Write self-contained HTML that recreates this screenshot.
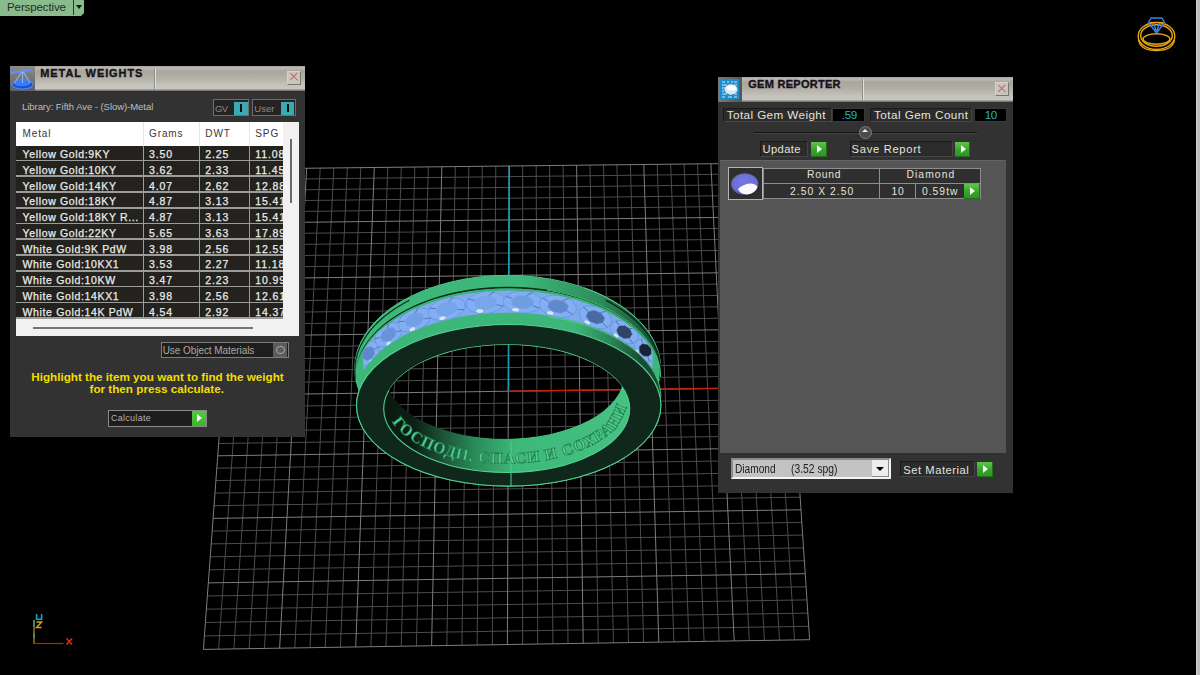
<!DOCTYPE html>
<html><head><meta charset="utf-8"><style>
*{margin:0;padding:0;box-sizing:border-box}
html,body{width:1200px;height:675px;overflow:hidden;background:#000;font-family:"Liberation Sans",sans-serif}
.a{position:absolute}
.t{position:absolute;white-space:pre;line-height:1}
</style></head><body>
<svg class="a" style="left:0;top:0" width="1200" height="675" viewBox="0 0 1200 675">
<path d="M252.5 168.8L218.6 649.2M238.2 179.7L778.7 173.6M266.1 168.7L233.9 648.9M237.4 190.5L779.4 184.3M279.6 168.5L249.1 648.7M236.6 201.3L780.1 195.1M293.2 168.4L264.4 648.4M235.8 212.2L780.8 205.9M320.2 168.1L294.8 647.9M234.2 234.1L782.3 227.7M333.8 167.9L310.0 647.7M233.4 245.2L783.0 238.7M347.3 167.8L325.2 647.5M232.5 256.3L783.7 249.7M360.8 167.6L340.4 647.2M231.7 267.5L784.5 260.8M387.8 167.3L370.9 646.7M230.0 290.1L786.0 283.3M401.3 167.2L386.0 646.5M229.2 301.5L786.7 294.6M414.8 167.0L401.2 646.2M228.3 313.0L787.5 305.9M428.3 166.9L416.4 646.0M227.5 324.5L788.2 317.4M455.3 166.6L446.8 645.5M225.8 347.7L789.8 340.4M468.8 166.4L461.9 645.3M224.9 359.5L790.5 352.1M482.3 166.3L477.1 645.0M224.0 371.3L791.3 363.8M495.8 166.1L492.3 644.8M223.1 383.1L792.1 375.6M522.7 165.8L522.6 644.3M221.4 407.1L793.7 399.3M536.2 165.7L537.7 644.1M220.5 419.1L794.5 411.3M549.6 165.5L552.9 643.8M219.6 431.3L795.3 423.4M563.1 165.4L568.0 643.6M218.7 443.5L796.1 435.5M590.0 165.1L598.3 643.1M216.8 468.2L797.7 459.9M603.5 164.9L613.4 642.8M215.9 480.6L798.5 472.3M616.9 164.8L628.5 642.6M215.0 493.1L799.3 484.7M630.4 164.6L643.6 642.4M214.0 505.7L800.2 497.2M657.2 164.3L673.9 641.9M212.2 531.1L801.8 522.4M670.7 164.2L689.0 641.6M211.2 543.9L802.7 535.1M684.1 164.0L704.1 641.4M210.3 556.8L803.5 547.9M697.5 163.9L719.1 641.1M209.3 569.8L804.4 560.8M724.4 163.6L749.3 640.7M207.4 596.0L806.1 586.8M737.8 163.4L764.4 640.4M206.4 609.2L807.0 599.9M751.2 163.3L779.5 640.2M205.4 622.5L807.8 613.1M764.6 163.1L794.5 639.9M204.4 635.9L808.7 626.3" stroke="#4c4c4c" stroke-width="1" fill="none"/>
<path d="M239.0 169.0L203.4 649.4M239.0 169.0L778.0 163.0M306.7 168.2L279.6 648.2M235.0 223.1L781.6 216.7M374.3 167.5L355.7 647.0M230.9 278.8L785.2 272.0M441.8 166.7L431.6 645.7M226.6 336.1L789.0 328.9M509.2 166.0L507.4 644.5M222.2 395.1L792.9 387.4M576.6 165.2L583.2 643.3M217.7 455.8L796.9 447.7M643.8 164.5L658.8 642.1M213.1 518.4L801.0 509.8M710.9 163.7L734.2 640.9M208.3 582.9L805.2 573.7M778.0 163.0L809.6 639.7M203.4 649.4L809.6 639.7" stroke="#7c7c7c" stroke-width="1" fill="none"/>
<path d="M508.4 391.2L509.2 166.0" stroke="#14a3b4" stroke-width="1.6"/>
<path d="M508.4 391.2L792.9 387.4" stroke="#c42010" stroke-width="1.6"/>
<defs>
<linearGradient id="gTop" gradientUnits="userSpaceOnUse" x1="520" y1="0" x2="660" y2="0">
<stop offset="0" stop-color="#3eb87a"/><stop offset="0.55" stop-color="#2f8e5c"/><stop offset="1" stop-color="#184a30"/></linearGradient>
<linearGradient id="gLow" gradientUnits="userSpaceOnUse" x1="575" y1="0" x2="640" y2="0">
<stop offset="0" stop-color="#3db679"/><stop offset="0.6" stop-color="#2a8052"/><stop offset="1" stop-color="#1a4c32"/></linearGradient>
<linearGradient id="gIn" gradientUnits="userSpaceOnUse" x1="390" y1="0" x2="630" y2="0">
<stop offset="0" stop-color="#0a1a10"/><stop offset="0.1" stop-color="#0d2015"/><stop offset="0.35" stop-color="#2a8a58"/><stop offset="0.52" stop-color="#3db878"/><stop offset="1" stop-color="#46c283"/></linearGradient>
<clipPath id="cGemBand"><path d="M652.3 350.7L650.1 347.2L647.6 343.7L644.9 340.3L641.9 337.0L638.7 333.7L635.2 330.5L631.5 327.4L627.6 324.4L623.5 321.5L619.2 318.7L614.7 316.0L609.9 313.4L605.0 311.0L600.0 308.6L594.7 306.4L589.3 304.3L583.8 302.4L578.1 300.6L572.3 298.9L566.4 297.4L560.4 296.1L554.3 294.8L548.1 293.8L541.8 292.8L535.5 292.1L529.1 291.5L522.7 291.0L516.3 290.8L509.8 290.6L503.4 290.7L496.9 290.9L490.5 291.2L484.1 291.7L477.7 292.4L471.4 293.2L465.2 294.2L459.0 295.3L453.0 296.6L447.0 298.0L441.1 299.6L435.4 301.3L429.8 303.2L424.3 305.2L419.0 307.3L413.8 309.6L408.8 312.0L404.0 314.5L399.3 317.1L394.9 319.8L390.7 322.7L386.6 325.6L382.8 328.7L379.2 331.8L375.9 335.0L372.8 338.3L369.9 341.7L367.2 345.2L364.9 348.7L362.7 352.2L363.5 370.6L365.6 367.2L368.0 363.9L370.7 360.7L373.5 357.5L376.6 354.4L380.0 351.4L383.6 348.4L387.4 345.6L391.4 342.8L395.6 340.2L400.1 337.6L404.7 335.1L409.5 332.8L414.5 330.5L419.6 328.4L425.0 326.4L430.4 324.5L436.0 322.8L441.8 321.2L447.6 319.7L453.6 318.3L459.6 317.1L465.8 316.1L472.0 315.1L478.3 314.4L484.6 313.7L491.0 313.3L497.4 312.9L503.9 312.8L510.3 312.7L516.8 312.8L523.2 313.1L529.6 313.5L536.0 314.1L542.3 314.8L548.5 315.7L554.7 316.7L560.8 317.8L566.8 319.1L572.7 320.5L578.5 322.1L584.2 323.8L589.7 325.6L595.1 327.6L600.3 329.6L605.3 331.8L610.2 334.1L614.9 336.6L619.4 339.1L623.8 341.7L627.9 344.4L631.8 347.3L635.4 350.2L638.9 353.2L642.1 356.2L645.1 359.4L647.8 362.6L650.3 365.8L652.5 369.2Z"/></clipPath>
<clipPath id="cBin"><ellipse cx="504.8" cy="375.8" rx="118.9" ry="62.9" /></clipPath>
<mask id="mHole" maskUnits="userSpaceOnUse" x="0" y="0" width="1200" height="675">
<rect x="0" y="0" width="1200" height="675" fill="#fff"/>
<ellipse cx="506.7" cy="408.7" rx="123.0" ry="63.8" fill="#000" clip-path="url(#cBin)"/>
</mask>
<mask id="mText" maskUnits="userSpaceOnUse" x="0" y="0" width="1200" height="675">
<rect x="0" y="0" width="1200" height="675" fill="#fff"/><ellipse cx="504.8" cy="375.8" rx="118.9" ry="62.9" fill="#000"/></mask>
<path id="tp" d="M390.0 419.3L396.2 427.5L402.3 433.4L408.5 438.1L414.6 442.1L420.8 445.5L426.9 448.4L433.1 451.0L439.2 453.3L445.4 455.2L451.5 457.0L457.7 458.5L463.8 459.8L470.0 460.8L476.2 461.8L482.3 462.5L488.5 463.0L494.6 463.4L500.8 463.6L506.9 463.7L513.1 463.6L519.2 463.3L525.4 462.9L531.5 462.3L537.7 461.6L543.8 460.6L550.0 459.5L556.2 458.1L562.3 456.6L568.5 454.8L574.6 452.7L580.8 450.4L586.9 447.8L593.1 444.7L599.2 441.2L605.4 437.0L611.5 432.0L617.7 425.6L623.8 414.5L630.0 400.1"/>
</defs>
<g mask="url(#mHole)">
<ellipse cx="507.6" cy="368.3" rx="152.9" ry="92.9" fill="#3db679" stroke="#52d091" stroke-width="1"/>
<ellipse cx="508.7" cy="405.3" rx="152.2" ry="80.8" fill="#3db679" stroke="#52d091" stroke-width="1"/>
<path d="M660.5 368.3L660.3 363.4L659.6 358.4L658.6 353.5L657.0 348.7L655.1 343.9L652.8 339.1L650.0 334.5L646.8 329.9L643.3 325.5L639.3 321.1L635.0 316.9L630.3 312.9L625.3 309.0L619.9 305.3L614.3 301.7L608.3 298.4L602.0 295.2L595.5 292.3L588.7 289.5L581.7 287.0L574.5 284.8L567.1 282.7L559.5 280.9L551.7 279.4L543.9 278.1L535.9 277.0L527.9 276.2L519.8 275.7L511.7 275.4L503.5 275.4L495.4 275.7L487.3 276.2L479.3 277.0L471.3 278.1L463.5 279.4L455.7 280.9L448.1 282.7L440.7 284.8L433.5 287.0L426.5 289.5L419.7 292.3L413.2 295.2L406.9 298.4L400.9 301.7L395.3 305.3L389.9 309.0L384.9 312.9L380.2 316.9L375.9 321.1L371.9 325.5L368.4 329.9L365.2 334.5L362.4 339.1L360.1 343.9L358.2 348.7L356.6 353.5L355.6 358.4L354.9 363.4L354.7 368.3L355.1 376.8L355.3 372.0L356.0 367.2L357.1 362.5L358.6 357.8L360.5 353.1L362.8 348.5L365.6 344.0L368.8 339.6L372.3 335.3L376.3 331.1L380.6 327.0L385.2 323.1L390.3 319.3L395.6 315.7L401.3 312.2L407.3 309.0L413.5 305.9L420.1 303.1L426.8 300.4L433.8 298.0L441.1 295.8L448.5 293.8L456.0 292.0L463.8 290.5L471.6 289.3L479.6 288.3L487.6 287.5L495.7 287.0L503.8 286.7L511.9 286.7L520.0 287.0L528.1 287.5L536.2 288.3L544.1 289.3L551.9 290.5L559.7 292.0L567.2 293.8L574.6 295.8L581.9 298.0L588.9 300.4L595.6 303.1L602.2 305.9L608.4 309.0L614.4 312.2L620.1 315.7L625.4 319.3L630.5 323.1L635.1 327.0L639.4 331.1L643.4 335.3L646.9 339.6L650.1 344.0L652.9 348.5L655.2 353.1L657.1 357.8L658.6 362.5L659.7 367.2L660.4 372.0L660.6 376.8Z" fill="url(#gTop)"/>
<path d="M659.9 376.4L660.1 374.6L660.3 372.8L660.4 371.0L660.5 369.3L660.5 367.5L660.4 365.7L660.3 363.9L660.2 362.1L659.9 360.3L659.7 358.6L659.3 356.8L658.9 355.0L658.5 353.3L658.0 351.5L657.4 349.7L656.8 348.0L656.1 346.3L655.4 344.5L654.6 342.8L653.8 341.1L652.9 339.4L652.0 337.7L651.0 336.0L649.9 334.3L648.8 332.7L647.7 331.0L646.5 329.4L645.2 327.8L643.9 326.2L642.5 324.6L641.1 323.0L639.7 321.5L638.2 320.0L636.6 318.4L635.0 316.9L633.4 315.5L631.7 314.0L629.9 312.6L628.1 311.1L626.3 309.8L624.4 308.4L622.5 307.0L620.6 305.7L618.6 304.4L616.5 303.1L614.4 301.8L612.3 300.6L610.1 299.4L607.9 298.2L605.7 297.0L603.4 295.9L601.1 294.8L598.8 293.7L596.4 292.7L594.0 291.7L591.6 290.7L589.1 289.7L586.6 288.8L584.1 287.8" stroke="#52d091" stroke-width="1" fill="none"/>
<path d="M659.9 378.9L660.1 377.4L660.3 375.9L660.4 374.4L660.5 372.9L660.5 371.4L660.5 369.9L660.5 368.4L660.4 366.9L660.3 365.4L660.1 364.0L659.9 362.5L659.6 361.0L659.3 359.5L659.0 358.0L658.7 356.5L658.2 355.0L657.8 353.6L657.3 352.1L656.8 350.6L656.2 349.2L655.6 347.7L655.0 346.3L654.3 344.8L653.6 343.4L652.8 342.0L652.0 340.6L651.2 339.2L650.3 337.7L649.4 336.4L648.4 335.0L647.4 333.6L646.4 332.2L645.3 330.9L644.2 329.5L643.1 328.2L641.9 326.9L640.7 325.6L639.5 324.3L638.2 323.0L636.9 321.7L635.5 320.5L634.2 319.2L632.8 318.0L631.3 316.8L629.8 315.6L628.3 314.4L626.8 313.2L625.2 312.0L623.6 310.9L622.0 309.8L620.3 308.6L618.6 307.6L616.9 306.5L615.1 305.4L613.3 304.4L611.5 303.3L609.7 302.3L607.8 301.3L605.9 300.4" stroke="#0e2a1b" stroke-width="1.6" fill="none"/>
<path d="M409.4 300.4L407.5 301.3L405.7 302.3L403.8 303.3L402.0 304.4L400.2 305.4L398.5 306.5L396.8 307.6L395.1 308.6L393.4 309.8L391.8 310.9L390.2 312.0L388.6 313.2L387.0 314.4L385.5 315.6L384.0 316.8L382.6 318.0L381.2 319.2L379.8 320.5L378.5 321.7L377.1 323.0L375.9 324.3L374.6 325.6L373.4 326.9L372.3 328.2L371.1 329.5L370.0 330.9L369.0 332.2L367.9 333.6L366.9 335.0L366.0 336.4L365.1 337.7L364.2 339.2L363.4 340.6L362.6 342.0L361.8 343.4L361.1 344.8L360.4 346.3L359.7 347.7L359.1 349.2L358.6 350.6L358.0 352.1L357.6 353.6L357.1 355.0L356.7 356.5L356.3 358.0L356.0 359.5L355.7 361.0L355.5 362.5L355.3 364.0L355.1 365.4L355.0 366.9L354.9 368.4L354.8 369.9L354.8 371.4L354.9 372.9L354.9 374.4L355.1 375.9L355.2 377.4L355.4 378.9" stroke="#0e2a1b" stroke-width="1.2" fill="none"/>
<path d="M660.6 376.8L660.4 372.0L659.7 367.2L658.6 362.5L657.1 357.8L655.2 353.1L652.9 348.5L650.1 344.0L646.9 339.6L643.4 335.3L639.4 331.1L635.1 327.0L630.5 323.1L625.4 319.3L620.1 315.7L614.4 312.2L608.4 309.0L602.2 305.9L595.6 303.1L588.9 300.4L581.9 298.0L574.6 295.8L567.2 293.8L559.7 292.0L551.9 290.5L544.1 289.3L536.2 288.3L528.1 287.5L520.0 287.0L511.9 286.7L503.8 286.7L495.7 287.0L487.6 287.5L479.6 288.3L471.6 289.3L463.8 290.5L456.0 292.0L448.5 293.8L441.1 295.8L433.8 298.0L426.8 300.4L420.1 303.1L413.5 305.9L407.3 309.0L401.3 312.2L395.6 315.7L390.3 319.3L385.2 323.1L380.6 327.0L376.3 331.1L372.3 335.3L368.8 339.6L365.6 344.0L362.8 348.5L360.5 353.1L358.6 357.8L357.1 362.5L356.0 367.2L355.3 372.0L355.1 376.8L355.2 378.1L355.4 373.3L356.0 368.6L357.1 363.8L358.6 359.1L360.6 354.5L362.9 349.9L365.7 345.4L368.8 341.0L372.4 336.7L376.3 332.6L380.6 328.5L385.3 324.6L390.3 320.9L395.7 317.3L401.4 313.8L407.3 310.6L413.6 307.6L420.1 304.7L426.9 302.1L433.9 299.6L441.1 297.4L448.5 295.5L456.1 293.7L463.8 292.2L471.6 291.0L479.6 290.0L487.6 289.2L495.7 288.7L503.8 288.4L512.0 288.4L520.1 288.7L528.2 289.2L536.2 290.0L544.1 291.0L552.0 292.2L559.7 293.7L567.3 295.5L574.7 297.4L581.9 299.6L588.9 302.1L595.7 304.7L602.2 307.6L608.5 310.6L614.4 313.8L620.1 317.3L625.5 320.9L630.5 324.6L635.2 328.5L639.5 332.6L643.4 336.7L647.0 341.0L650.1 345.4L652.9 349.9L655.2 354.5L657.2 359.1L658.7 363.8L659.7 368.6L660.4 373.3L660.6 378.1Z" fill="#0f2c1d"/>
<path d="M660.6 378.1L660.4 373.3L659.7 368.6L658.7 363.8L657.2 359.1L655.2 354.5L652.9 349.9L650.1 345.4L647.0 341.0L643.4 336.7L639.5 332.6L635.2 328.5L630.5 324.6L625.5 320.9L620.1 317.3L614.4 313.8L608.5 310.6L602.2 307.6L595.7 304.7L588.9 302.1L581.9 299.6L574.7 297.4L567.3 295.5L559.7 293.7L552.0 292.2L544.1 291.0L536.2 290.0L528.2 289.2L520.1 288.7L512.0 288.4L503.8 288.4L495.7 288.7L487.6 289.2L479.6 290.0L471.6 291.0L463.8 292.2L456.1 293.7L448.5 295.5L441.1 297.4L433.9 299.6L426.9 302.1L420.1 304.7L413.6 307.6L407.3 310.6L401.4 313.8L395.7 317.3L390.3 320.9L385.3 324.6L380.6 328.5L376.3 332.6L372.4 336.7L368.8 341.0L365.7 345.4L362.9 349.9L360.6 354.5L358.6 359.1L357.1 363.8L356.0 368.6L355.4 373.3L355.2 378.1L355.3 379.8L355.5 375.0L356.1 370.3L357.2 365.6L358.7 360.9L360.6 356.3L363.0 351.8L365.7 347.3L368.9 342.9L372.5 338.7L376.4 334.5L380.7 330.5L385.4 326.6L390.4 322.9L395.8 319.3L401.4 315.9L407.4 312.7L413.7 309.6L420.2 306.8L427.0 304.2L434.0 301.8L441.2 299.6L448.6 297.6L456.1 295.9L463.9 294.4L471.7 293.2L479.7 292.2L487.7 291.4L495.8 290.9L503.9 290.7L512.0 290.7L520.1 290.9L528.2 291.4L536.2 292.2L544.2 293.2L552.0 294.4L559.7 295.9L567.3 297.6L574.7 299.6L581.9 301.8L588.9 304.2L595.7 306.8L602.2 309.6L608.5 312.7L614.5 315.9L620.1 319.3L625.5 322.9L630.5 326.6L635.2 330.5L639.5 334.5L643.4 338.7L647.0 342.9L650.1 347.3L652.9 351.8L655.2 356.3L657.2 360.9L658.7 365.6L659.8 370.3L660.4 375.0L660.6 379.8Z" fill="#3ab376"/>
<path d="M660.8 396.4L660.8 394.2L660.6 392.0L660.3 389.7L659.9 387.5L659.5 385.3L658.9 383.1L658.2 380.9L657.4 378.7L656.5 376.6L655.4 374.4L654.3 372.3L653.1 370.1L651.8 368.0L650.3 365.9L648.8 363.9L647.2 361.8L645.5 359.8L643.6 357.8L641.7 355.9L639.7 353.9L637.6 352.0L635.4 350.1L633.1 348.3L630.7 346.5L628.3 344.7L625.7 343.0L623.1 341.3L620.4 339.6L617.6 338.0L614.7 336.4L611.8 334.9L608.8 333.4L605.7 332.0L602.5 330.6L599.3 329.2L596.0 327.9L592.7 326.7L589.3 325.5L585.8 324.3L582.3 323.2L578.7 322.1L575.1 321.1L571.4 320.2L567.7 319.3L563.9 318.5L560.1 317.7L556.3 317.0L552.4 316.3L548.5 315.7L544.6 315.1L540.6 314.6L536.7 314.2L532.7 313.8L528.7 313.5L524.6 313.2L520.6 313.0L516.5 312.8L512.5 312.7L508.4 312.7L508.7 324.5L512.8 324.5L516.8 324.6L520.8 324.8L524.9 325.0L528.9 325.2L532.9 325.5L536.9 325.9L540.9 326.3L544.8 326.8L548.7 327.3L552.6 327.9L556.5 328.6L560.3 329.3L564.1 330.0L567.9 330.9L571.6 331.7L575.3 332.6L578.9 333.6L582.4 334.6L586.0 335.7L589.4 336.8L592.8 338.0L596.2 339.2L599.5 340.4L602.7 341.7L605.8 343.1L608.9 344.5L611.9 345.9L614.9 347.4L617.7 348.9L620.5 350.5L623.2 352.1L625.9 353.7L628.4 355.4L630.9 357.1L633.2 358.9L635.5 360.6L637.7 362.4L639.8 364.3L641.8 366.1L643.8 368.0L645.6 370.0L647.3 371.9L648.9 373.9L650.4 375.9L651.9 377.9L653.2 379.9L654.4 382.0L655.5 384.0L656.6 386.1L657.5 388.2L658.3 390.3L659.0 392.4L659.6 394.6L660.0 396.7L660.4 398.9L660.7 401.0L660.8 403.1L660.9 405.3Z" fill="url(#gLow)"/>
<path d="M660.8 397.2L660.8 395.3L660.7 393.5L660.5 391.6L660.2 389.8L659.9 387.9L659.5 386.1L659.0 384.3L658.4 382.4L657.8 380.6L657.1 378.8L656.3 377.0L655.4 375.2L654.5 373.4L653.5 371.7L652.5 369.9L651.3 368.2L650.1 366.4L648.8 364.7L647.5 363.0L646.1 361.3L644.6 359.7L643.0 358.0L641.4 356.4L639.7 354.8L638.0 353.2L636.2 351.6L634.3 350.1L632.3 348.6L630.3 347.1L628.3 345.6L626.2 344.2L624.0 342.8L621.8 341.4L619.5 340.0L617.1 338.7L614.7 337.4L612.3 336.1L609.8 334.8L607.2 333.6L604.7 332.4L602.0 331.3L599.3 330.2L596.6 329.1L593.8 328.0L591.0 327.0L588.1 326.0L585.2 325.1L582.3 324.2L579.3 323.3L576.3 322.4L573.3 321.6L570.2 320.9L567.1 320.1L563.9 319.4L560.8 318.8L557.6 318.2L554.4 317.6L551.1 317.0L547.9 316.5" stroke="#4fd08f" stroke-width="0.9" fill="none"/>
<path d="M660.6 377.2L660.6 375.2L660.4 373.2L660.3 371.2L660.0 369.2L659.7 367.2L659.2 365.2L658.8 363.3L658.2 361.3L657.6 359.3L656.9 357.4L656.1 355.4L655.2 353.5L654.3 351.6L653.3 349.7L652.2 347.8L651.1 345.9L649.9 344.0L648.6 342.2L647.2 340.4L645.8 338.5L644.3 336.8L642.8 335.0L641.1 333.2L639.5 331.5L637.7 329.8L635.9 328.1L634.0 326.4L632.1 324.8L630.1 323.2L628.0 321.6L625.9 320.0L623.7 318.5L621.5 317.0L619.2 315.6L616.8 314.1L614.4 312.7L612.0 311.3L609.5 310.0L606.9 308.7L604.3 307.4L601.6 306.1L598.9 304.9L596.2 303.8L593.4 302.6L590.6 301.5L587.7 300.5L584.8 299.4L581.9 298.5L578.9 297.5L575.9 296.6L572.8 295.7L569.7 294.9L566.6 294.1L563.5 293.4L560.3 292.7L557.1 292.0L553.9 291.4L550.7 290.8L547.4 290.3" stroke="#4fd08f" stroke-width="0.9" fill="none"/>
<path d="M652.3 350.7L650.1 347.2L647.6 343.7L644.9 340.3L641.9 337.0L638.7 333.7L635.2 330.5L631.5 327.4L627.6 324.4L623.5 321.5L619.2 318.7L614.7 316.0L609.9 313.4L605.0 311.0L600.0 308.6L594.7 306.4L589.3 304.3L583.8 302.4L578.1 300.6L572.3 298.9L566.4 297.4L560.4 296.1L554.3 294.8L548.1 293.8L541.8 292.8L535.5 292.1L529.1 291.5L522.7 291.0L516.3 290.8L509.8 290.6L503.4 290.7L496.9 290.9L490.5 291.2L484.1 291.7L477.7 292.4L471.4 293.2L465.2 294.2L459.0 295.3L453.0 296.6L447.0 298.0L441.1 299.6L435.4 301.3L429.8 303.2L424.3 305.2L419.0 307.3L413.8 309.6L408.8 312.0L404.0 314.5L399.3 317.1L394.9 319.8L390.7 322.7L386.6 325.6L382.8 328.7L379.2 331.8L375.9 335.0L372.8 338.3L369.9 341.7L367.2 345.2L364.9 348.7L362.7 352.2L363.5 370.6L365.6 367.2L368.0 363.9L370.7 360.7L373.5 357.5L376.6 354.4L380.0 351.4L383.6 348.4L387.4 345.6L391.4 342.8L395.6 340.2L400.1 337.6L404.7 335.1L409.5 332.8L414.5 330.5L419.6 328.4L425.0 326.4L430.4 324.5L436.0 322.8L441.8 321.2L447.6 319.7L453.6 318.3L459.6 317.1L465.8 316.1L472.0 315.1L478.3 314.4L484.6 313.7L491.0 313.3L497.4 312.9L503.9 312.8L510.3 312.7L516.8 312.8L523.2 313.1L529.6 313.5L536.0 314.1L542.3 314.8L548.5 315.7L554.7 316.7L560.8 317.8L566.8 319.1L572.7 320.5L578.5 322.1L584.2 323.8L589.7 325.6L595.1 327.6L600.3 329.6L605.3 331.8L610.2 334.1L614.9 336.6L619.4 339.1L623.8 341.7L627.9 344.4L631.8 347.3L635.4 350.2L638.9 353.2L642.1 356.2L645.1 359.4L647.8 362.6L650.3 365.8L652.5 369.2Z" fill="#7eaaf0"/>
<g clip-path="url(#cGemBand)"><g transform="translate(368.4 353.5) rotate(-55.0)"><ellipse rx="13.4" ry="9.4" fill="#82aef4" stroke="#6c98de" stroke-width="0.9"/><polygon points="7.3,2.3 3.0,5.6 -3.0,5.6 -7.3,2.3 -7.3,-2.3 -3.0,-5.6 3.0,-5.6 7.3,-2.3" fill="#5f88cc" stroke="#7ea6e6" stroke-width="0.6"/><path d="M7.2 2.8L11.8 4.7M-7.2 -2.8L-11.8 -4.7M2.6 -5.7L6.6 -8.3M-2.6 5.7L-5.9 8.3" stroke="#5676b0" stroke-width="0.9"/><ellipse cx="-4.6" cy="6.8" rx="2.4" ry="1.5" fill="#e8f4ff" opacity="0.85"/></g><g transform="translate(388.4 334.6) rotate(-37.7)"><ellipse rx="15.5" ry="10.0" fill="#82aef4" stroke="#6c98de" stroke-width="0.9"/><polygon points="8.4,2.5 3.5,5.9 -3.5,5.9 -8.4,2.5 -8.4,-2.5 -3.5,-5.9 3.5,-5.9 8.4,-2.5" fill="#6a94da" stroke="#7ea6e6" stroke-width="0.6"/><path d="M8.4 3.0L13.7 5.0M-8.4 -3.0L-13.7 -5.0M3.0 -6.0L7.6 -8.8M-3.0 6.0L-6.9 8.8" stroke="#5676b0" stroke-width="0.9"/><ellipse cx="-5.3" cy="7.2" rx="2.7" ry="1.6" fill="#e8f4ff" opacity="0.85"/></g><g transform="translate(414.6 319.9) rotate(-25.3)"><ellipse rx="17.4" ry="10.5" fill="#82aef4" stroke="#6c98de" stroke-width="0.9"/><polygon points="9.5,2.6 3.9,6.2 -3.9,6.2 -9.5,2.6 -9.5,-2.6 -3.9,-6.2 3.9,-6.2 9.5,-2.6" fill="#72a0e6" stroke="#7ea6e6" stroke-width="0.6"/><path d="M9.4 3.1L15.4 5.2M-9.4 -3.1L-15.4 -5.2M3.4 -6.3L8.5 -9.2M-3.4 6.3L-7.7 9.2" stroke="#5676b0" stroke-width="0.9"/><ellipse cx="-6.0" cy="7.5" rx="3.1" ry="1.7" fill="#e8f4ff" opacity="0.85"/></g><g transform="translate(446.7 309.0) rotate(-15.3)"><ellipse rx="18.9" ry="10.8" fill="#82aef4" stroke="#6c98de" stroke-width="0.9"/><polygon points="10.3,2.7 4.2,6.4 -4.2,6.4 -10.3,2.7 -10.3,-2.7 -4.2,-6.4 4.2,-6.4 10.3,-2.7" fill="#76a4ea" stroke="#7ea6e6" stroke-width="0.6"/><path d="M10.2 3.2L16.6 5.4M-10.2 -3.2L-16.6 -5.4M3.7 -6.5L9.2 -9.5M-3.7 6.5L-8.3 9.5" stroke="#5676b0" stroke-width="0.9"/><ellipse cx="-6.5" cy="7.8" rx="3.3" ry="1.7" fill="#e8f4ff" opacity="0.85"/></g><g transform="translate(485.6 302.6) rotate(-6.0)"><ellipse rx="19.6" ry="11.0" fill="#82aef4" stroke="#6c98de" stroke-width="0.9"/><polygon points="10.7,2.7 4.4,6.5 -4.4,6.5 -10.7,2.7 -10.7,-2.7 -4.4,-6.5 4.4,-6.5 10.7,-2.7" fill="#78a6ec" stroke="#7ea6e6" stroke-width="0.6"/><path d="M10.6 3.3L17.3 5.5M-10.6 -3.3L-17.3 -5.5M3.8 -6.6L9.6 -9.7M-3.8 6.6L-8.7 9.7" stroke="#5676b0" stroke-width="0.9"/><ellipse cx="-6.7" cy="7.9" rx="3.5" ry="1.8" fill="#e8f4ff" opacity="0.85"/></g><g transform="translate(522.6 302.1) rotate(1.9)"><ellipse rx="19.5" ry="11.0" fill="#82aef4" stroke="#6c98de" stroke-width="0.9"/><polygon points="10.6,2.7 4.4,6.5 -4.4,6.5 -10.6,2.7 -10.6,-2.7 -4.4,-6.5 4.4,-6.5 10.6,-2.7" fill="#709ce2" stroke="#7ea6e6" stroke-width="0.6"/><path d="M10.5 3.3L17.2 5.5M-10.5 -3.3L-17.2 -5.5M3.8 -6.6L9.6 -9.7M-3.8 6.6L-8.6 9.7" stroke="#5676b0" stroke-width="0.9"/><ellipse cx="-6.7" cy="7.9" rx="3.4" ry="1.8" fill="#e8f4ff" opacity="0.85"/></g><g transform="translate(558.0 306.4) rotate(9.9)"><ellipse rx="18.7" ry="10.9" fill="#82aef4" stroke="#6c98de" stroke-width="0.9"/><polygon points="10.1,2.7 4.2,6.4 -4.2,6.4 -10.1,2.7 -10.1,-2.7 -4.2,-6.4 4.2,-6.4 10.1,-2.7" fill="#6088cc" stroke="#7ea6e6" stroke-width="0.6"/><path d="M10.1 3.3L16.5 5.5M-10.1 -3.3L-16.5 -5.5M3.7 -6.5L9.1 -9.6M-3.7 6.5L-8.2 9.6" stroke="#5676b0" stroke-width="0.9"/><ellipse cx="-6.4" cy="7.8" rx="3.3" ry="1.7" fill="#e8f4ff" opacity="0.85"/></g><g transform="translate(595.4 317.2) rotate(20.1)"><ellipse rx="16.9" ry="10.6" fill="#82aef4" stroke="#6c98de" stroke-width="0.9"/><polygon points="9.2,2.6 3.8,6.2 -3.8,6.2 -9.2,2.6 -9.2,-2.6 -3.8,-6.2 3.8,-6.2 9.2,-2.6" fill="#4a6aa4" stroke="#7ea6e6" stroke-width="0.6"/><path d="M9.1 3.2L14.9 5.3M-9.1 -3.2L-14.9 -5.3M3.3 -6.3L8.3 -9.3M-3.3 6.3L-7.5 9.3" stroke="#5676b0" stroke-width="0.9"/><ellipse cx="-5.8" cy="7.6" rx="3.0" ry="1.7" fill="#e8f4ff" opacity="0.85"/></g><g transform="translate(624.3 332.1) rotate(31.8)"><ellipse rx="14.8" ry="10.1" fill="#82aef4" stroke="#6c98de" stroke-width="0.9"/><polygon points="8.0,2.5 3.3,6.0 -3.3,6.0 -8.0,2.5 -8.0,-2.5 -3.3,-6.0 3.3,-6.0 8.0,-2.5" fill="#30446a" stroke="#7ea6e6" stroke-width="0.6"/><path d="M8.0 3.0L13.0 5.0M-8.0 -3.0L-13.0 -5.0M2.9 -6.1L7.2 -8.9M-2.9 6.1L-6.5 8.9" stroke="#5676b0" stroke-width="0.9"/><ellipse cx="-5.1" cy="7.3" rx="2.6" ry="1.6" fill="#e8f4ff" opacity="0.85"/></g><g transform="translate(645.3 350.2) rotate(46.8)"><ellipse rx="12.7" ry="9.5" fill="#82aef4" stroke="#6c98de" stroke-width="0.9"/><polygon points="6.9,2.3 2.9,5.6 -2.9,5.6 -6.9,2.3 -6.9,-2.3 -2.9,-5.6 2.9,-5.6 6.9,-2.3" fill="#182436" stroke="#7ea6e6" stroke-width="0.6"/><path d="M6.9 2.9L11.2 4.8M-6.9 -2.9L-11.2 -4.8M2.5 -5.7L6.2 -8.4M-2.5 5.7L-5.6 8.4" stroke="#5676b0" stroke-width="0.9"/><ellipse cx="-4.4" cy="6.9" rx="2.2" ry="1.5" fill="#e8f4ff" opacity="0.85"/></g></g>
<ellipse cx="508.7" cy="405.3" rx="152.2" ry="80.8" fill="#10281b" stroke="#4fd08f" stroke-width="1.1"/>
<g mask="url(#mText)"><ellipse cx="506.7" cy="408.7" rx="123.0" ry="63.8" fill="url(#gIn)"/>
<text font-family="Liberation Serif" font-weight="bold" font-size="16" fill="#50d090" stroke="#247c4e" stroke-width="0.7"><textPath href="#tp" startOffset="3" textLength="268" lengthAdjust="spacing">ГОСПОДИ, СПАСИ И СОХРАНИ</textPath></text>
</g>
<ellipse cx="506.7" cy="408.7" rx="123.0" ry="63.8" fill="none" stroke="#4fd08f" stroke-width="1.1"/>
<path d="M511 441V486" stroke="#4fd08f" stroke-width="1"/>
</g>
</svg>
<!-- right edge bar -->
<div class="a" style="left:1196px;top:0;width:4px;height:675px;background:#bdbdbd;border-left:1px solid #d0d2d2"></div>
<!-- perspective tab -->
<div class="a" style="left:0;top:0;width:84px;height:16px;background:#89bb8c;clip-path:polygon(0 0,84px 0,84px 13px,81px 16px,0 16px)"></div>
<div class="t" style="left:7px;top:1.1px;font-size:11.6px;letter-spacing:-0.15px;color:#2a2a2a">Perspective</div>
<div class="a" style="left:73px;top:0;width:1px;height:15px;background:#333"></div>
<div class="a" style="left:76px;top:5px;width:0;height:0;border-left:3px solid transparent;border-right:3px solid transparent;border-top:4px solid #111"></div>
<style>
.pn{position:absolute;background:#323232}
.tb{position:absolute;background:linear-gradient(#a6a399 0%,#bebcb5 8%,#a9a69c 20%,#b1aea6 45%,#c3c2bb 75%,#c6c5be 90%,#8a8985 97%,#555 100%)}
.cls{position:absolute;background:#c6c5be;border:1px solid #d2d1cb;border-right-color:#77766f;border-bottom-color:#77766f}
.cls::before,.cls::after{content:"";position:absolute;left:0.9px;top:4.8px;width:9.5px;height:1.3px;background:#dc5a5e;transform:rotate(45deg)}
.cls::after{transform:rotate(-45deg)}
.grn{position:absolute;background:linear-gradient(#5fc64b,#38a52b 50%,#2d9423);box-shadow:inset -1px -1px 0 #226e1a}
.grn::after{content:"";position:absolute;left:50%;top:50%;margin-left:-2px;margin-top:-4.5px;border-top:4.5px solid transparent;border-bottom:4.5px solid transparent;border-left:5px solid #f4f4f4}
.lb{position:absolute;background:#2b2b2b;border:1px solid #1a1a1a;border-right-color:#454545;border-bottom-color:#474747}
</style>
<div class="a" style="left:10.00px;top:66.00px;width:295.00px;height:371.00px;background:#323232"></div>
<div class="tb" style="left:10px;top:66px;width:295px;height:25px"></div>
<div class="a" style="left:154.00px;top:68.00px;width:1.00px;height:21.00px;background:#8f8d87"></div><div class="a" style="left:155.00px;top:68.00px;width:1.00px;height:21.00px;background:#e2e0da"></div>
<div class="a" style="left:10.00px;top:66.00px;width:25.00px;height:25.00px;background:linear-gradient(#8c8c8c,#606060)"></div>
<svg class="a" style="left:10px;top:66px" width="26" height="25" viewBox="0 0 26 25">
<ellipse cx="12.5" cy="18.5" rx="10.5" ry="4.5" fill="#1a4fe0"/><ellipse cx="12" cy="17.5" rx="8" ry="2.8" fill="#3d7cf8"/>
<path d="M12.5 4.5L4.5 17M12.5 4.5L20 17M12.5 4.5L12.5 17" stroke="#8ab6ff" stroke-width="1.1" fill="none"/>
<path d="M0 6.8L21 4" stroke="#5a96ff" stroke-width="1.7"/><ellipse cx="12.5" cy="18.5" rx="10.5" ry="4.5" fill="none" stroke="#5ea0ff" stroke-width="0.8"/></svg>
<div class="t" style="left:40.30px;top:67.69px;font-size:11px;color:#16121c;letter-spacing:0.9px;font-weight:bold;-webkit-text-stroke:0.35px #16121c">METAL WEIGHTS</div>
<div class="cls" style="left:287px;top:70.5px;width:14px;height:14px"></div>
<div class="t" style="left:22.00px;top:102.06px;font-size:9.5px;color:#b6bec8;letter-spacing:-0.05px;">Library: Fifth Ave - (Slow)-Metal</div>
<div class="a" style="left:213.00px;top:99.00px;width:36.00px;height:17.00px;background:#252321;border:1px solid #6e6e6e"></div>
<div class="t" style="left:215.00px;top:103.96px;font-size:9.5px;color:#8c8c8c;letter-spacing:-0.6px;">GV</div>
<div class="a" style="left:234.00px;top:101.50px;width:13.50px;height:13.00px;background:#38acb2"></div>
<div class="a" style="left:239.80px;top:103.50px;width:2.00px;height:8.50px;background:#0a0a0a"></div>
<div class="a" style="left:252.00px;top:99.00px;width:44.00px;height:17.00px;background:#252321;border:1px solid #6e6e6e"></div>
<div class="t" style="left:254.30px;top:103.96px;font-size:9.5px;color:#8c8c8c;letter-spacing:0px;">User</div>
<div class="a" style="left:281.30px;top:101.50px;width:13.20px;height:13.00px;background:#38acb2"></div>
<div class="a" style="left:286.80px;top:103.50px;width:2.00px;height:8.50px;background:#0a0a0a"></div>
<div class="a" style="left:16.00px;top:122.00px;width:283.00px;height:213.70px;background:#f1f1f1"></div>
<div class="a" style="left:16.00px;top:122.00px;width:267.00px;height:24.00px;background:#fff"></div>
<div class="a" style="left:142.70px;top:122.00px;width:1.00px;height:24.00px;background:#e6e6e6"></div>
<div class="a" style="left:198.70px;top:122.00px;width:1.00px;height:24.00px;background:#e6e6e6"></div>
<div class="a" style="left:248.70px;top:122.00px;width:1.00px;height:24.00px;background:#e6e6e6"></div>
<div class="a" style="left:16.00px;top:146.00px;width:267.00px;height:172.00px;background:#fff"></div>
<div class="a" style="left:290.00px;top:139.00px;width:1.60px;height:64.00px;background:#6a6a6a"></div>
<div class="a" style="left:33.00px;top:326.50px;width:220.00px;height:2.00px;background:#747474"></div>
<div class="t" style="left:22.50px;top:129.23px;font-size:10px;color:#3a3440;letter-spacing:0.9px;">Metal</div>
<div class="t" style="left:149.00px;top:129.23px;font-size:10px;color:#3a3440;letter-spacing:0.9px;">Grams</div>
<div class="t" style="left:205.30px;top:129.23px;font-size:10px;color:#3a3440;letter-spacing:0.9px;">DWT</div>
<div class="t" style="left:255.30px;top:129.23px;font-size:10px;color:#3a3440;letter-spacing:0.9px;">SPG</div>
<div class="a" style="left:16.00px;top:145.50px;width:267.00px;height:15.80px;background:#9c9c9a"></div>
<div class="a" style="left:16.00px;top:145.50px;width:126.70px;height:14.10px;background:#23221f"></div>
<div class="a" style="left:144.00px;top:145.50px;width:54.70px;height:14.10px;background:#23221f"></div>
<div class="a" style="left:200.30px;top:145.50px;width:48.40px;height:14.10px;background:#23221f"></div>
<div class="a" style="left:250.40px;top:145.50px;width:32.30px;height:14.10px;background:#23221f"></div>
<div class="t" style="left:22.50px;top:149.01px;font-size:10.5px;color:#ececE8;letter-spacing:0.65px;-webkit-text-stroke:0.25px #ececE8">Yellow Gold:9KY</div>
<div class="t" style="left:149.00px;top:149.01px;font-size:10.5px;color:#ececE8;letter-spacing:0.9px;-webkit-text-stroke:0.25px #ececE8">3.50</div>
<div class="t" style="left:205.30px;top:149.01px;font-size:10.5px;color:#ececE8;letter-spacing:0.9px;-webkit-text-stroke:0.25px #ececE8">2.25</div>
<div class="a" style="left:250.4px;top:145.50px;width:32.3px;height:14.4px;overflow:hidden"><div class="t" style="left:4.90px;top:3.51px;font-size:10.5px;color:#ececE8;letter-spacing:0.9px;-webkit-text-stroke:0.25px #ececE8">11.08</div></div>
<div class="a" style="left:16.00px;top:161.28px;width:267.00px;height:15.80px;background:#9c9c9a"></div>
<div class="a" style="left:16.00px;top:161.28px;width:126.70px;height:14.10px;background:#23221f"></div>
<div class="a" style="left:144.00px;top:161.28px;width:54.70px;height:14.10px;background:#23221f"></div>
<div class="a" style="left:200.30px;top:161.28px;width:48.40px;height:14.10px;background:#23221f"></div>
<div class="a" style="left:250.40px;top:161.28px;width:32.30px;height:14.10px;background:#23221f"></div>
<div class="t" style="left:22.50px;top:164.79px;font-size:10.5px;color:#ececE8;letter-spacing:0.65px;-webkit-text-stroke:0.25px #ececE8">Yellow Gold:10KY</div>
<div class="t" style="left:149.00px;top:164.79px;font-size:10.5px;color:#ececE8;letter-spacing:0.9px;-webkit-text-stroke:0.25px #ececE8">3.62</div>
<div class="t" style="left:205.30px;top:164.79px;font-size:10.5px;color:#ececE8;letter-spacing:0.9px;-webkit-text-stroke:0.25px #ececE8">2.33</div>
<div class="a" style="left:250.4px;top:161.28px;width:32.3px;height:14.4px;overflow:hidden"><div class="t" style="left:4.90px;top:3.51px;font-size:10.5px;color:#ececE8;letter-spacing:0.9px;-webkit-text-stroke:0.25px #ececE8">11.45</div></div>
<div class="a" style="left:16.00px;top:177.05px;width:267.00px;height:15.80px;background:#9c9c9a"></div>
<div class="a" style="left:16.00px;top:177.05px;width:126.70px;height:14.10px;background:#23221f"></div>
<div class="a" style="left:144.00px;top:177.05px;width:54.70px;height:14.10px;background:#23221f"></div>
<div class="a" style="left:200.30px;top:177.05px;width:48.40px;height:14.10px;background:#23221f"></div>
<div class="a" style="left:250.40px;top:177.05px;width:32.30px;height:14.10px;background:#23221f"></div>
<div class="t" style="left:22.50px;top:180.56px;font-size:10.5px;color:#ececE8;letter-spacing:0.65px;-webkit-text-stroke:0.25px #ececE8">Yellow Gold:14KY</div>
<div class="t" style="left:149.00px;top:180.56px;font-size:10.5px;color:#ececE8;letter-spacing:0.9px;-webkit-text-stroke:0.25px #ececE8">4.07</div>
<div class="t" style="left:205.30px;top:180.56px;font-size:10.5px;color:#ececE8;letter-spacing:0.9px;-webkit-text-stroke:0.25px #ececE8">2.62</div>
<div class="a" style="left:250.4px;top:177.05px;width:32.3px;height:14.4px;overflow:hidden"><div class="t" style="left:4.90px;top:3.51px;font-size:10.5px;color:#ececE8;letter-spacing:0.9px;-webkit-text-stroke:0.25px #ececE8">12.88</div></div>
<div class="a" style="left:16.00px;top:192.82px;width:267.00px;height:15.80px;background:#9c9c9a"></div>
<div class="a" style="left:16.00px;top:192.82px;width:126.70px;height:14.10px;background:#23221f"></div>
<div class="a" style="left:144.00px;top:192.82px;width:54.70px;height:14.10px;background:#23221f"></div>
<div class="a" style="left:200.30px;top:192.82px;width:48.40px;height:14.10px;background:#23221f"></div>
<div class="a" style="left:250.40px;top:192.82px;width:32.30px;height:14.10px;background:#23221f"></div>
<div class="t" style="left:22.50px;top:196.34px;font-size:10.5px;color:#ececE8;letter-spacing:0.65px;-webkit-text-stroke:0.25px #ececE8">Yellow Gold:18KY</div>
<div class="t" style="left:149.00px;top:196.34px;font-size:10.5px;color:#ececE8;letter-spacing:0.9px;-webkit-text-stroke:0.25px #ececE8">4.87</div>
<div class="t" style="left:205.30px;top:196.34px;font-size:10.5px;color:#ececE8;letter-spacing:0.9px;-webkit-text-stroke:0.25px #ececE8">3.13</div>
<div class="a" style="left:250.4px;top:192.82px;width:32.3px;height:14.4px;overflow:hidden"><div class="t" style="left:4.90px;top:3.51px;font-size:10.5px;color:#ececE8;letter-spacing:0.9px;-webkit-text-stroke:0.25px #ececE8">15.41</div></div>
<div class="a" style="left:16.00px;top:208.60px;width:267.00px;height:15.80px;background:#9c9c9a"></div>
<div class="a" style="left:16.00px;top:208.60px;width:126.70px;height:14.10px;background:#23221f"></div>
<div class="a" style="left:144.00px;top:208.60px;width:54.70px;height:14.10px;background:#23221f"></div>
<div class="a" style="left:200.30px;top:208.60px;width:48.40px;height:14.10px;background:#23221f"></div>
<div class="a" style="left:250.40px;top:208.60px;width:32.30px;height:14.10px;background:#23221f"></div>
<div class="t" style="left:22.50px;top:212.11px;font-size:10.5px;color:#ececE8;letter-spacing:0.65px;-webkit-text-stroke:0.25px #ececE8">Yellow Gold:18KY R...</div>
<div class="t" style="left:149.00px;top:212.11px;font-size:10.5px;color:#ececE8;letter-spacing:0.9px;-webkit-text-stroke:0.25px #ececE8">4.87</div>
<div class="t" style="left:205.30px;top:212.11px;font-size:10.5px;color:#ececE8;letter-spacing:0.9px;-webkit-text-stroke:0.25px #ececE8">3.13</div>
<div class="a" style="left:250.4px;top:208.60px;width:32.3px;height:14.4px;overflow:hidden"><div class="t" style="left:4.90px;top:3.51px;font-size:10.5px;color:#ececE8;letter-spacing:0.9px;-webkit-text-stroke:0.25px #ececE8">15.41</div></div>
<div class="a" style="left:16.00px;top:224.38px;width:267.00px;height:15.80px;background:#9c9c9a"></div>
<div class="a" style="left:16.00px;top:224.38px;width:126.70px;height:14.10px;background:#23221f"></div>
<div class="a" style="left:144.00px;top:224.38px;width:54.70px;height:14.10px;background:#23221f"></div>
<div class="a" style="left:200.30px;top:224.38px;width:48.40px;height:14.10px;background:#23221f"></div>
<div class="a" style="left:250.40px;top:224.38px;width:32.30px;height:14.10px;background:#23221f"></div>
<div class="t" style="left:22.50px;top:227.89px;font-size:10.5px;color:#ececE8;letter-spacing:0.65px;-webkit-text-stroke:0.25px #ececE8">Yellow Gold:22KY</div>
<div class="t" style="left:149.00px;top:227.89px;font-size:10.5px;color:#ececE8;letter-spacing:0.9px;-webkit-text-stroke:0.25px #ececE8">5.65</div>
<div class="t" style="left:205.30px;top:227.89px;font-size:10.5px;color:#ececE8;letter-spacing:0.9px;-webkit-text-stroke:0.25px #ececE8">3.63</div>
<div class="a" style="left:250.4px;top:224.38px;width:32.3px;height:14.4px;overflow:hidden"><div class="t" style="left:4.90px;top:3.51px;font-size:10.5px;color:#ececE8;letter-spacing:0.9px;-webkit-text-stroke:0.25px #ececE8">17.89</div></div>
<div class="a" style="left:16.00px;top:240.15px;width:267.00px;height:15.80px;background:#9c9c9a"></div>
<div class="a" style="left:16.00px;top:240.15px;width:126.70px;height:14.10px;background:#23221f"></div>
<div class="a" style="left:144.00px;top:240.15px;width:54.70px;height:14.10px;background:#23221f"></div>
<div class="a" style="left:200.30px;top:240.15px;width:48.40px;height:14.10px;background:#23221f"></div>
<div class="a" style="left:250.40px;top:240.15px;width:32.30px;height:14.10px;background:#23221f"></div>
<div class="t" style="left:22.50px;top:243.66px;font-size:10.5px;color:#ececE8;letter-spacing:0.65px;-webkit-text-stroke:0.25px #ececE8">White Gold:9K PdW</div>
<div class="t" style="left:149.00px;top:243.66px;font-size:10.5px;color:#ececE8;letter-spacing:0.9px;-webkit-text-stroke:0.25px #ececE8">3.98</div>
<div class="t" style="left:205.30px;top:243.66px;font-size:10.5px;color:#ececE8;letter-spacing:0.9px;-webkit-text-stroke:0.25px #ececE8">2.56</div>
<div class="a" style="left:250.4px;top:240.15px;width:32.3px;height:14.4px;overflow:hidden"><div class="t" style="left:4.90px;top:3.51px;font-size:10.5px;color:#ececE8;letter-spacing:0.9px;-webkit-text-stroke:0.25px #ececE8">12.59</div></div>
<div class="a" style="left:16.00px;top:255.93px;width:267.00px;height:15.80px;background:#9c9c9a"></div>
<div class="a" style="left:16.00px;top:255.93px;width:126.70px;height:14.10px;background:#23221f"></div>
<div class="a" style="left:144.00px;top:255.93px;width:54.70px;height:14.10px;background:#23221f"></div>
<div class="a" style="left:200.30px;top:255.93px;width:48.40px;height:14.10px;background:#23221f"></div>
<div class="a" style="left:250.40px;top:255.93px;width:32.30px;height:14.10px;background:#23221f"></div>
<div class="t" style="left:22.50px;top:259.44px;font-size:10.5px;color:#ececE8;letter-spacing:0.65px;-webkit-text-stroke:0.25px #ececE8">White Gold:10KX1</div>
<div class="t" style="left:149.00px;top:259.44px;font-size:10.5px;color:#ececE8;letter-spacing:0.9px;-webkit-text-stroke:0.25px #ececE8">3.53</div>
<div class="t" style="left:205.30px;top:259.44px;font-size:10.5px;color:#ececE8;letter-spacing:0.9px;-webkit-text-stroke:0.25px #ececE8">2.27</div>
<div class="a" style="left:250.4px;top:255.93px;width:32.3px;height:14.4px;overflow:hidden"><div class="t" style="left:4.90px;top:3.51px;font-size:10.5px;color:#ececE8;letter-spacing:0.9px;-webkit-text-stroke:0.25px #ececE8">11.18</div></div>
<div class="a" style="left:16.00px;top:271.70px;width:267.00px;height:15.80px;background:#9c9c9a"></div>
<div class="a" style="left:16.00px;top:271.70px;width:126.70px;height:14.10px;background:#23221f"></div>
<div class="a" style="left:144.00px;top:271.70px;width:54.70px;height:14.10px;background:#23221f"></div>
<div class="a" style="left:200.30px;top:271.70px;width:48.40px;height:14.10px;background:#23221f"></div>
<div class="a" style="left:250.40px;top:271.70px;width:32.30px;height:14.10px;background:#23221f"></div>
<div class="t" style="left:22.50px;top:275.21px;font-size:10.5px;color:#ececE8;letter-spacing:0.65px;-webkit-text-stroke:0.25px #ececE8">White Gold:10KW</div>
<div class="t" style="left:149.00px;top:275.21px;font-size:10.5px;color:#ececE8;letter-spacing:0.9px;-webkit-text-stroke:0.25px #ececE8">3.47</div>
<div class="t" style="left:205.30px;top:275.21px;font-size:10.5px;color:#ececE8;letter-spacing:0.9px;-webkit-text-stroke:0.25px #ececE8">2.23</div>
<div class="a" style="left:250.4px;top:271.70px;width:32.3px;height:14.4px;overflow:hidden"><div class="t" style="left:4.90px;top:3.51px;font-size:10.5px;color:#ececE8;letter-spacing:0.9px;-webkit-text-stroke:0.25px #ececE8">10.99</div></div>
<div class="a" style="left:16.00px;top:287.48px;width:267.00px;height:15.80px;background:#9c9c9a"></div>
<div class="a" style="left:16.00px;top:287.48px;width:126.70px;height:14.10px;background:#23221f"></div>
<div class="a" style="left:144.00px;top:287.48px;width:54.70px;height:14.10px;background:#23221f"></div>
<div class="a" style="left:200.30px;top:287.48px;width:48.40px;height:14.10px;background:#23221f"></div>
<div class="a" style="left:250.40px;top:287.48px;width:32.30px;height:14.10px;background:#23221f"></div>
<div class="t" style="left:22.50px;top:290.99px;font-size:10.5px;color:#ececE8;letter-spacing:0.65px;-webkit-text-stroke:0.25px #ececE8">White Gold:14KX1</div>
<div class="t" style="left:149.00px;top:290.99px;font-size:10.5px;color:#ececE8;letter-spacing:0.9px;-webkit-text-stroke:0.25px #ececE8">3.98</div>
<div class="t" style="left:205.30px;top:290.99px;font-size:10.5px;color:#ececE8;letter-spacing:0.9px;-webkit-text-stroke:0.25px #ececE8">2.56</div>
<div class="a" style="left:250.4px;top:287.48px;width:32.3px;height:14.4px;overflow:hidden"><div class="t" style="left:4.90px;top:3.51px;font-size:10.5px;color:#ececE8;letter-spacing:0.9px;-webkit-text-stroke:0.25px #ececE8">12.61</div></div>
<div class="a" style="left:16.00px;top:303.25px;width:267.00px;height:15.80px;background:#9c9c9a"></div>
<div class="a" style="left:16.00px;top:303.25px;width:126.70px;height:14.10px;background:#23221f"></div>
<div class="a" style="left:144.00px;top:303.25px;width:54.70px;height:14.10px;background:#23221f"></div>
<div class="a" style="left:200.30px;top:303.25px;width:48.40px;height:14.10px;background:#23221f"></div>
<div class="a" style="left:250.40px;top:303.25px;width:32.30px;height:14.10px;background:#23221f"></div>
<div class="t" style="left:22.50px;top:306.76px;font-size:10.5px;color:#ececE8;letter-spacing:0.65px;-webkit-text-stroke:0.25px #ececE8">White Gold:14K PdW</div>
<div class="t" style="left:149.00px;top:306.76px;font-size:10.5px;color:#ececE8;letter-spacing:0.9px;-webkit-text-stroke:0.25px #ececE8">4.54</div>
<div class="t" style="left:205.30px;top:306.76px;font-size:10.5px;color:#ececE8;letter-spacing:0.9px;-webkit-text-stroke:0.25px #ececE8">2.92</div>
<div class="a" style="left:250.4px;top:303.25px;width:32.3px;height:14.4px;overflow:hidden"><div class="t" style="left:4.90px;top:3.51px;font-size:10.5px;color:#ececE8;letter-spacing:0.9px;-webkit-text-stroke:0.25px #ececE8">14.37</div></div>
<div class="a" style="left:160.50px;top:341.50px;width:128.00px;height:16.50px;background:#1f1e1c;border:1px solid #7c7c7c"></div>
<div class="a" style="left:273.30px;top:342.50px;width:14.20px;height:14.50px;background:#5c5c5c"></div>
<div class="a" style="left:276.20px;top:345.50px;width:8.50px;height:8.50px;border:1px solid #a8a8a8;border-radius:50%"></div>
<div class="t" style="left:162.70px;top:345.94px;font-size:10px;color:#a9a9a9;letter-spacing:-0.06px;">Use Object Materials</div>
<div class="t" style="left:31.20px;top:370.60px;font-size:11.7px;color:#f0de00;letter-spacing:0px;font-weight:bold;">Highlight the item you want to find the weight</div>
<div class="t" style="left:89.50px;top:382.70px;font-size:11.7px;color:#f0de00;letter-spacing:0px;font-weight:bold;">for then press calculate.</div>
<div class="a" style="left:108.00px;top:410.00px;width:99.00px;height:17.00px;background:#1e1d1c;border:1px solid #8a8a8a"></div>
<div class="t" style="left:111.00px;top:414.38px;font-size:9px;color:#b2b2b2;letter-spacing:0.27px;">Calculate</div>
<div class="a" style="left:192.00px;top:411.00px;width:13.50px;height:15.00px;background:linear-gradient(#52c83e,#3cb42c)"></div>
<div class="a" style="left:197px;top:414px;border-top:4.5px solid transparent;border-bottom:4.5px solid transparent;border-left:5px solid #f2f2f2"></div>
<div class="a" style="left:718.00px;top:77.00px;width:295.00px;height:416.00px;background:#323232"></div>
<div class="tb" style="left:718px;top:77px;width:295px;height:25px"></div>
<div class="a" style="left:862.00px;top:79.00px;width:1.00px;height:21.00px;background:#8f8d87"></div><div class="a" style="left:863.00px;top:79.00px;width:1.00px;height:21.00px;background:#e2e0da"></div>
<div class="a" style="left:718.00px;top:77.00px;width:24.00px;height:25.00px;background:linear-gradient(90deg,#7a7a7a,#575757)"></div>
<svg class="a" style="left:720px;top:79px" width="20" height="21" viewBox="0 0 20 21">
<rect x="0" y="0" width="19" height="20" fill="#1f8ccc"/>
<path d="M2 3h3M7 3h2M11 3h2M14 3h3M2 6h5M9 6h3M14 6h3M2 9h3M2 12h2M2 15h5M9 15h3M14 15h3M2 18h3M8 18h4M14 18h3" stroke="#cfe6ff" stroke-width="1"/>
<ellipse cx="11" cy="10.5" rx="6.5" ry="5" fill="#dfe7ec"/><ellipse cx="11.5" cy="9" rx="4.5" ry="2.8" fill="#fff"/>
</svg>
<div class="t" style="left:748.20px;top:79.29px;font-size:11px;color:#16121c;letter-spacing:0.28px;font-weight:bold;-webkit-text-stroke:0.35px #16121c">GEM REPORTER</div>
<div class="cls" style="left:995px;top:82px;width:14px;height:13.5px"></div>
<div class="lb" style="left:723px;top:107.5px;width:108.5px;height:14.5px"></div>
<div class="a" style="left:832.00px;top:107.50px;width:33.00px;height:14.50px;background:#000;border:1px solid #383838"></div>
<div class="t" style="left:726.80px;top:108.50px;font-size:11.7px;color:#e4e4dc;letter-spacing:0.4px;">Total Gem Weight</div>
<div class="t" style="left:841.80px;top:108.50px;font-size:11.7px;color:#20b6c2;letter-spacing:-0.4px;">.59</div>
<div class="lb" style="left:870.3px;top:107.5px;width:102px;height:14.5px"></div>
<div class="a" style="left:973.70px;top:107.50px;width:33.30px;height:14.50px;background:#000;border:1px solid #383838"></div>
<div class="t" style="left:874.00px;top:108.50px;font-size:11.7px;color:#e4e4dc;letter-spacing:0.45px;">Total Gem Count</div>
<div class="t" style="left:984.70px;top:108.50px;font-size:11.7px;color:#20b6c2;letter-spacing:-0.45px;">10</div>
<div class="a" style="left:754.00px;top:131.80px;width:223.00px;height:1.00px;background:#141414"></div><div class="a" style="left:754.00px;top:132.80px;width:223.00px;height:1.00px;background:#444"></div>
<div class="a" style="left:858.50px;top:125.50px;width:13.00px;height:13.00px;border-radius:50%;background:#4c4c4c;border:1.2px solid #7c7c7c"></div>
<div class="a" style="left:862px;top:128.8px;border-left:3px solid transparent;border-right:3px solid transparent;border-bottom:3.5px solid #ececec"></div>
<div class="lb" style="left:760.3px;top:141.3px;width:48px;height:15.4px"></div>
<div class="t" style="left:762.50px;top:143.82px;font-size:11.2px;color:#e4e4dc;letter-spacing:0.4px;">Update</div>
<div class="grn" style="left:811.00px;top:142.00px;width:16.00px;height:14.70px"></div>
<div class="lb" style="left:850px;top:141.3px;width:102.5px;height:15.4px"></div>
<div class="t" style="left:851.60px;top:143.82px;font-size:11.2px;color:#e4e4dc;letter-spacing:0.69px;">Save Report</div>
<div class="grn" style="left:954.70px;top:142.00px;width:15.80px;height:14.50px"></div>
<div class="a" style="left:720.00px;top:160.00px;width:286.00px;height:293.00px;background:#555;border-top:1px solid #626262"></div>
<div class="a" style="left:728.00px;top:167.30px;width:34.60px;height:32.30px;background:#2e2e2e;border:1px solid #b4b4b4"></div>
<svg class="a" style="left:729px;top:168px" width="33" height="31" viewBox="0 0 33 31">
<defs><radialGradient id="gg" cx="0.45" cy="0.35" r="0.75"><stop offset="0" stop-color="#7478e0"/><stop offset="0.7" stop-color="#6a6ed6"/><stop offset="1" stop-color="#5a60c0"/></radialGradient></defs>
<ellipse cx="16.3" cy="17.3" rx="13.9" ry="10.6" fill="#111" opacity="0.45"/>
<ellipse cx="15.7" cy="16.1" rx="13.9" ry="10.9" fill="#8a8cd0" opacity="0.55"/>
<ellipse cx="16" cy="16" rx="12.8" ry="10" fill="url(#gg)"/>
<path d="M9 21Q14 16 21 15.5Q27 15.5 28.5 19Q26 26 18 26.5Q11 26 9 21Z" fill="#f8faff"/></svg>
<div class="a" style="left:762.60px;top:167.70px;width:218.10px;height:31.30px;background:#2f2f2f;border:1px solid #8e8e8e"></div>
<div class="a" style="left:763.00px;top:182.60px;width:217.70px;height:1.00px;background:#8e8e8e"></div>
<div class="a" style="left:879.20px;top:167.70px;width:1.00px;height:31.30px;background:#8e8e8e"></div>
<div class="a" style="left:914.50px;top:183.00px;width:1.00px;height:16.00px;background:#8e8e8e"></div>
<div class="t" style="left:806.90px;top:169.98px;font-size:10.3px;color:#e4e4dc;letter-spacing:0.8px;">Round</div>
<div class="t" style="left:906.40px;top:169.98px;font-size:10.3px;color:#e4e4dc;letter-spacing:1.1px;">Diamond</div>
<div class="t" style="left:790.00px;top:187.08px;font-size:10.3px;color:#e4e4dc;letter-spacing:1.05px;">2.50 X 2.50</div>
<div class="t" style="left:891.60px;top:187.08px;font-size:10.3px;color:#e4e4dc;letter-spacing:0.6px;">10</div>
<div class="t" style="left:921.90px;top:187.08px;font-size:10.3px;color:#e4e4dc;letter-spacing:1.05px;">0.59tw</div>
<div class="grn" style="left:963.70px;top:184.00px;width:15.90px;height:14.90px"></div>
<div class="a" style="left:730.70px;top:458.00px;width:160.30px;height:20.70px;background:#c3c3c3;border:2px solid #f4f4f4;border-top-color:#8c8c8c;border-left-color:#8c8c8c"></div>
<div class="a" style="left:872.00px;top:460.00px;width:16.50px;height:16.70px;background:#ededed;border-right:1px solid #8a8a8a;border-bottom:1px solid #8a8a8a"></div>
<div class="a" style="left:876.2px;top:466.5px;border-left:4px solid transparent;border-right:4px solid transparent;border-top:4px solid #000"></div>
<div class="t" style="left:735.30px;top:463.34px;font-size:12px;color:#202020;letter-spacing:0px;transform:scaleX(0.846);transform-origin:0 0">Diamond</div>
<div class="t" style="left:790.90px;top:463.34px;font-size:12px;color:#202020;letter-spacing:0px;transform:scaleX(0.86);transform-origin:0 0">(3.52 spg)</div>
<div class="lb" style="left:900.3px;top:461.3px;width:74.4px;height:16px"></div>
<div class="t" style="left:903.30px;top:464.52px;font-size:11.2px;color:#e4e4dc;letter-spacing:0.53px;">Set Material</div>
<div class="grn" style="left:977.00px;top:462.00px;width:16.00px;height:14.70px"></div>
<svg class="a" style="left:1130px;top:10px" width="52" height="46" viewBox="1130 10 52 46">
<g fill="none" stroke="#eaa514" stroke-width="1.4">
<ellipse cx="1156.5" cy="36" rx="18.3" ry="13.5"/>
<ellipse cx="1156.5" cy="35.5" rx="15.8" ry="10.8"/>
<ellipse cx="1156.5" cy="39" rx="13.5" ry="5.2"/>
<path d="M1138.5 39.5Q1140 50.5 1156.5 50.5Q1173 50.5 1174.5 39.5"/>
</g>
<g fill="none" stroke="#3d7fe6" stroke-width="1.5" stroke-linejoin="round">
<path d="M1151 18h11l2.5 4.5l-8 10.5l-8-10.5z"/><path d="M1153.5 22.5l3 10M1159.5 22.5l-3 10"/>
</g>
<path d="M1150 22.5h13" stroke="#eaa514" stroke-width="1.2"/>
</svg>
<svg class="a" style="left:20px;top:605px" width="60" height="45" viewBox="20 605 60 45">
<path d="M34 620V644" stroke="#d68a0a" stroke-width="1.2"/>
<path d="M34 620V627M34 633V638" stroke="#18a6b6" stroke-width="1.2"/>
<path d="M34 643.5H63.5" stroke="#bf2008" stroke-width="1.2"/>
<path d="M36.6 614v5.2h5v-5.2" stroke="#18a6b6" stroke-width="1.6" fill="none"/>
<path d="M36.5 622h5l-5 5.5h5" stroke="#e09a10" stroke-width="1.5" fill="none"/>
<path d="M66.5 638.5l5.5 6M72 638.5l-5.5 6" stroke="#d0300e" stroke-width="1.7"/>
</svg>
</body></html>
